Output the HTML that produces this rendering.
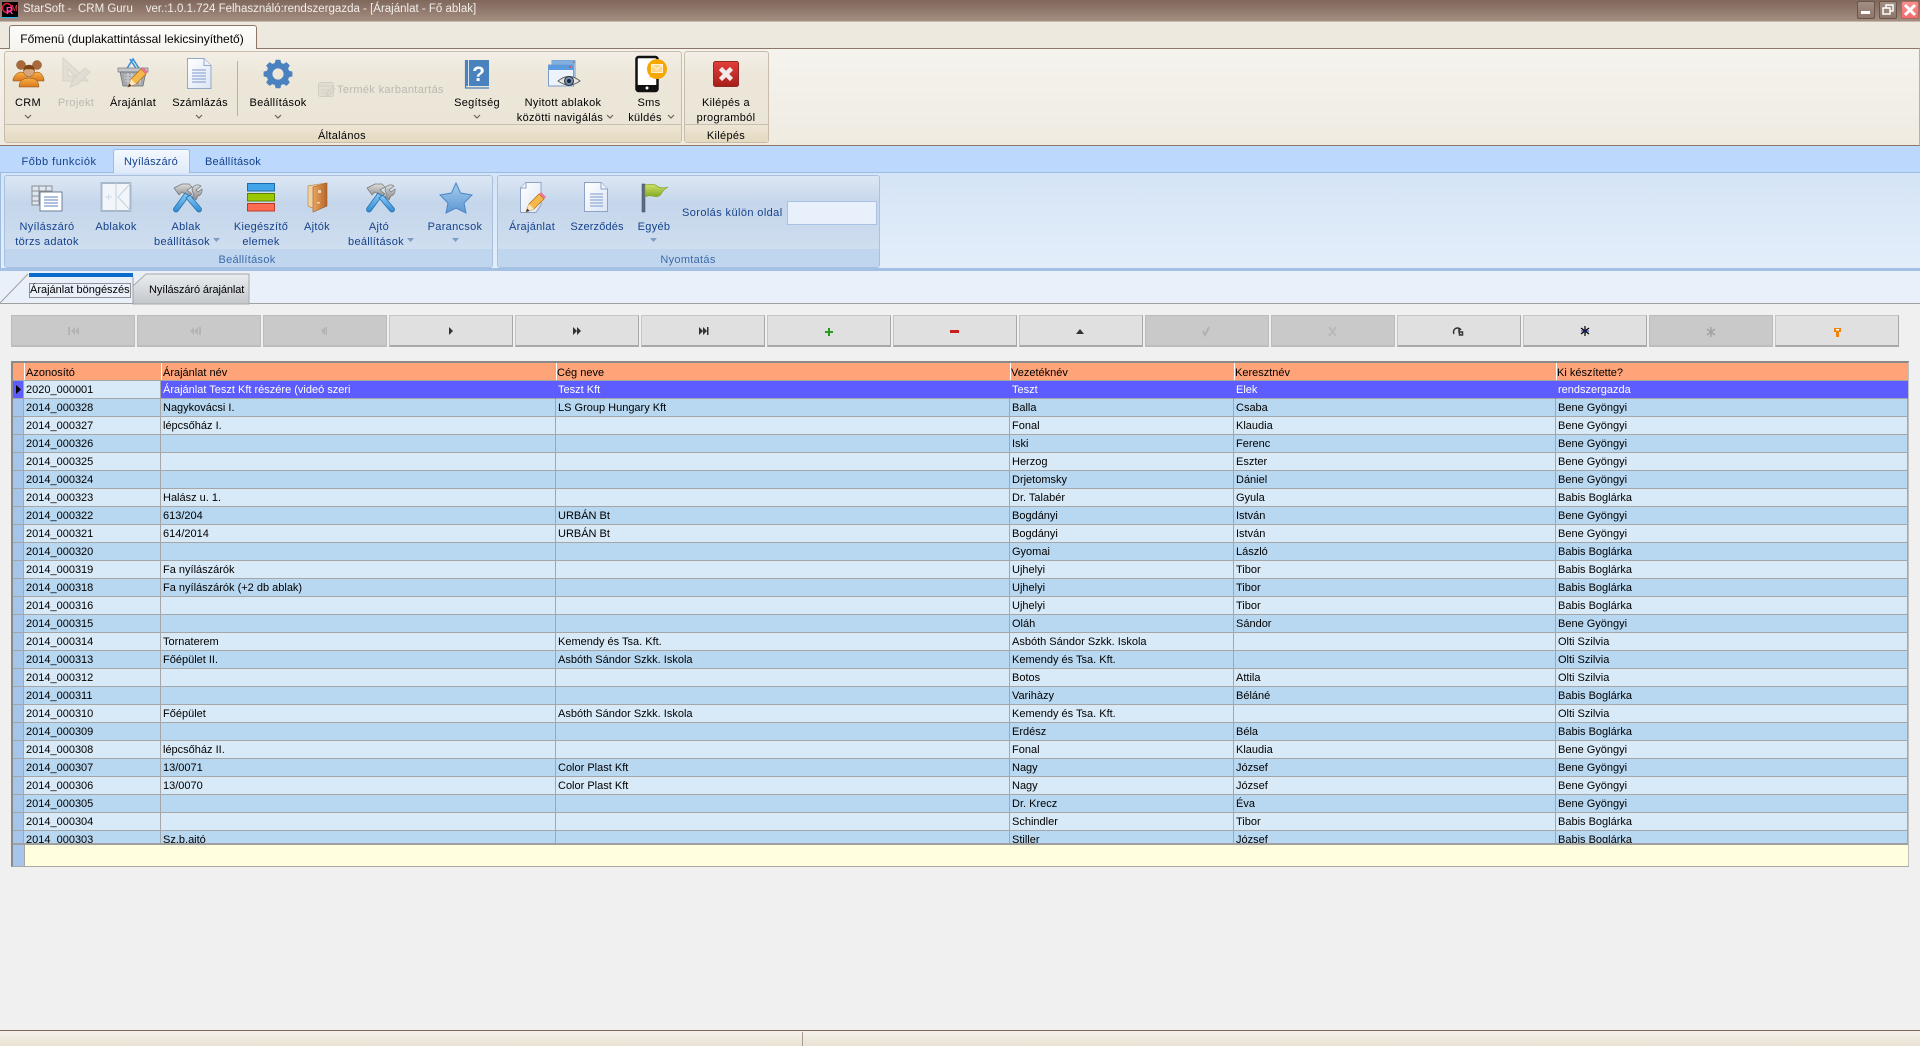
<!DOCTYPE html>
<html lang="hu"><head><meta charset="utf-8"><title>CRM Guru</title>
<style>
html,body{margin:0;padding:0}
body{width:1920px;height:1046px;overflow:hidden;position:relative;background:#f0f0f0;font:11px/14px "Liberation Sans",sans-serif;color:#000}
.a{position:absolute}
.t{position:absolute;transform:translate(-50%,-50%);white-space:pre;line-height:14px;margin-top:1px;letter-spacing:.3px}
.l{position:absolute;transform:translateY(-50%);white-space:pre;line-height:14px;margin-top:1px}
.b{color:#15428b}
.d{color:#bcb8b0}
.grp{position:absolute;box-sizing:border-box;border:1px solid #c9bdaa;border-radius:3px;background:linear-gradient(#f3efe7,#ede7da 25%,#eae4d6)}
.grp i{position:absolute;left:0;right:0;bottom:0;height:17px;border-top:1px solid #c8bfae;background:linear-gradient(#eee6d6,#e4d9c0)}
.grp2{position:absolute;box-sizing:border-box;border:1px solid #a9c1de;border-radius:3px;background:linear-gradient(#dce7f4,#c5d6eb 30%,#d2e1f1)}
.grp2 i{position:absolute;left:0;right:0;bottom:0;height:18px;background:#c0d6ee}
.nb{position:absolute;top:315px;width:124px;height:32px;box-sizing:border-box;background:#e0e0e0;border:1px solid #c6c6c6;border-right-color:#a8a8a8;border-bottom:2px solid #a8a8a8}
.nb.x{background:#c9c9c9;border-color:#bcbcbc}
.win{position:absolute;top:1px;width:18px;height:18px;box-sizing:border-box;border:1px solid #6b5449;border-radius:2px;background:linear-gradient(#a28e83,#8e766a)}
#g{position:absolute;left:13px;top:381px;width:1895px;height:462px;overflow:hidden}
table{border-collapse:separate;border-spacing:0;table-layout:fixed;width:1895px}
td{height:15px;padding:2px 0 0 2px;box-sizing:content-box;border-right:1px solid #a6a6a6;border-bottom:1px solid #a6a6a6;white-space:nowrap;overflow:hidden;line-height:15px;font-size:11px;vertical-align:top}
td:first-child{background:#a5c5ea;padding:0;border-right:1px solid #a6a6a6}
tr:nth-child(odd) td{background:#d8e9f7}
tr:nth-child(even) td{background:#b8d7f0}
tr td:first-child{background:#a5c5ea!important}
tr.s td{background:#5c5cff!important;color:#fff;border-right-color:#5c5cff}
tr.s td:nth-child(2){background:#d8e9f7!important;color:#000;border-right-color:#a6a6a6}
tr.s td:first-child{border-right-color:#a6a6a6}
</style></head><body>

<!-- title bar -->
<div class="a" style="left:0;top:0;width:1920px;height:22px;background:linear-gradient(#7f675b,#a48e80);border-bottom:1px solid #c5b8aa;box-sizing:border-box"></div>
<div class="a" style="left:0;top:22px;width:1920px;height:26px;background:#eee9de"></div>
<div class="l" style="left:23px;top:8px;color:#f2eee9;font-size:11.5px;letter-spacing:0">StarSoft -  CRM Guru    ver.:1.0.1.724 Felhasználó:rendszergazda - [Árajánlat - Fő ablak]</div>
<div class="win" style="left:1857px"></div><div class="win" style="left:1879px"></div>
<div class="win" style="left:1901px;background:linear-gradient(#f98d8d,#f36c6c);border-color:#a86a5f"></div>

<!-- ribbon 1 -->
<div class="a" style="left:0;top:48px;width:1920px;height:98px;box-sizing:border-box;background:linear-gradient(#f5f3ee,#efebe1);border-top:1px solid #8e7668;border-bottom:1px solid #8e7668;border-right:1px solid #bcb0a2"></div>
<div class="a" style="left:9px;top:25px;width:248px;height:24px;box-sizing:border-box;background:linear-gradient(#fdfdfb,#f6f4ef);border:1px solid #8e7668;border-bottom:0;border-radius:3px 3px 0 0"></div>
<div class="t" style="left:132px;top:38px;font-size:12px;letter-spacing:0">Főmenü (duplakattintással lekicsinyíthető)</div>
<div class="grp" style="left:4px;top:51px;width:678px;height:92px"><i></i></div>
<div class="grp" style="left:684px;top:51px;width:85px;height:92px"><i></i></div>
<div class="a" style="left:237px;top:61px;width:1px;height:55px;background:#b9b0a2"></div>

<div class="t" style="left:28px;top:102px">CRM</div>
<div class="t d" style="left:76px;top:102px">Projekt</div>
<div class="t" style="left:133px;top:102px">Árajánlat</div>
<div class="t" style="left:200px;top:102px;letter-spacing:.2px">Számlázás</div>
<div class="t" style="left:278px;top:102px">Beállítások</div>
<div class="l d" style="left:337px;top:89px;letter-spacing:.35px">Termék karbantartás</div>
<div class="t" style="left:477px;top:102px">Segítség</div>
<div class="t" style="left:563px;top:102px">Nyitott ablakok</div>
<div class="t" style="left:560px;top:117px">közötti navigálás</div>
<div class="t" style="left:649px;top:102px">Sms</div>
<div class="t" style="left:645px;top:117px">küldés</div>
<div class="t" style="left:726px;top:102px">Kilépés a</div>
<div class="t" style="left:726px;top:117px">programból</div>
<div class="t" style="left:342px;top:135px">Általános</div>
<div class="t" style="left:726px;top:135px">Kilépés</div>

<!-- ribbon 2 -->
<div class="a" style="left:0;top:146px;width:1920px;height:27px;background:#bcd8fc"></div>
<div class="a" style="left:0;top:172px;width:1920px;height:99px;box-sizing:border-box;background:linear-gradient(#d5e4f6,#e3eefa);border-top:1px solid #9bbbe0;border-bottom:3px solid #a3c1e4;border-left:1px solid #9bbbe0"></div>
<div class="a" style="left:113px;top:149px;width:77px;height:24px;box-sizing:border-box;background:linear-gradient(#f3f8fe,#dfeafa);border:1px solid #9bbbe0;border-bottom:0;border-radius:3px 3px 0 0"></div>
<div class="t b" style="left:59px;top:161px;letter-spacing:.5px">Főbb funkciók</div>
<div class="t b" style="left:151px;top:161px;letter-spacing:.2px">Nyílászáró</div>
<div class="t b" style="left:233px;top:161px;letter-spacing:.2px">Beállítások</div>
<div class="grp2" style="left:4px;top:175px;width:489px;height:93px"><i></i></div>
<div class="grp2" style="left:497px;top:175px;width:383px;height:93px"><i></i></div>

<div class="t b" style="left:47px;top:226px">Nyílászáró</div><div class="t b" style="left:47px;top:241px">törzs adatok</div>
<div class="t b" style="left:116px;top:226px">Ablakok</div>
<div class="t b" style="left:186px;top:226px">Ablak</div><div class="t b" style="left:182px;top:241px">beállítások</div>
<div class="t b" style="left:261px;top:226px">Kiegészítő</div><div class="t b" style="left:261px;top:241px">elemek</div>
<div class="t b" style="left:317px;top:226px">Ajtók</div>
<div class="t b" style="left:379px;top:226px">Ajtó</div><div class="t b" style="left:376px;top:241px">beállítások</div>
<div class="t b" style="left:455px;top:226px">Parancsok</div>
<div class="t" style="left:247px;top:259px;color:#3e6aaa">Beállítások</div>
<div class="t b" style="left:532px;top:226px">Árajánlat</div>
<div class="t b" style="left:597px;top:226px;letter-spacing:.15px">Szerződés</div>
<div class="t b" style="left:654px;top:226px">Egyéb</div>
<div class="l b" style="left:682px;top:212px;letter-spacing:.4px">Sorolás külön oldal</div>
<div class="a" style="left:787px;top:201px;width:90px;height:24px;box-sizing:border-box;background:#e8f0fb;border:1px solid #a9c1e3"></div>
<div class="t" style="left:688px;top:259px;color:#3e6aaa">Nyomtatás</div>

<!-- document tabs -->
<div class="a" style="left:0;top:271px;width:1920px;height:33px;background:#e9f0f9;border-bottom:1px solid #a0a0a0;box-sizing:border-box"></div>
<svg class="a" style="left:0;top:271px" width="260" height="34">
<path d="M133 33V15L146 3H249V33Z" fill="url(#tg)" stroke="#a8a8a8"/>
<path d="M0 32L28 3H133V32Z" fill="#e9f0f9"/><path d="M0 32L28 3" stroke="#a0a0a0" fill="none"/>
<rect x="29" y="2" width="104" height="4" fill="#0a6bcb"/>
<path d="M133 6V33" stroke="#a0a0a0"/>
<rect x="29.5" y="12.5" width="101" height="14" fill="none" stroke="#333" stroke-dasharray="1 1"/>
<defs><linearGradient id="tg" x1="0" y1="0" x2="0" y2="1"><stop offset="0" stop-color="#eaedf0"/><stop offset="1" stop-color="#c3c7cb"/></linearGradient></defs>
</svg>
<div class="l" style="left:30px;top:289px">Árajánlat böngészés</div>
<div class="l" style="left:149px;top:289px;letter-spacing:-.1px">Nyílászáró árajánlat</div>

<!-- nav buttons -->
<div class="nb x" style="left:11px"></div><div class="nb x" style="left:137px"></div><div class="nb x" style="left:263px"></div>
<div class="nb" style="left:389px"></div><div class="nb" style="left:515px"></div><div class="nb" style="left:641px"></div>
<div class="nb" style="left:767px"></div><div class="nb" style="left:893px"></div><div class="nb" style="left:1019px"></div>
<div class="nb x" style="left:1145px"></div><div class="nb x" style="left:1271px"></div>
<div class="nb" style="left:1397px"></div><div class="nb" style="left:1523px"></div>
<div class="nb x" style="left:1649px"></div><div class="nb" style="left:1775px"></div>

<!-- grid -->
<div class="a" style="left:11px;top:361px;width:1898px;height:506px;box-sizing:border-box;border:2px solid #a0a0a0;border-top-color:#8a8a8a;border-left-color:#8a8a8a;border-right:1px solid #c0c0c0;border-bottom:1px solid #a8a8a8;background:#ffffe0"></div>
<div class="a" style="left:13px;top:363px;width:1895px;height:17px;background:#ffa379"></div>
<div class="a" style="left:13px;top:380px;width:1895px;height:1px;background:#a6a6a6"></div>
<div class="a" style="left:24px;top:363px;width:1px;height:17px;background:#fff"></div>
<div class="a" style="left:161px;top:363px;width:1px;height:17px;background:#fff"></div>
<div class="a" style="left:556px;top:363px;width:1px;height:17px;background:#fff"></div>
<div class="a" style="left:1010px;top:363px;width:1px;height:17px;background:#fff"></div>
<div class="a" style="left:1234px;top:363px;width:1px;height:17px;background:#fff"></div>
<div class="a" style="left:1556px;top:363px;width:1px;height:17px;background:#fff"></div>
<div class="l" style="left:26px;top:372px">Azonosító</div>
<div class="l" style="left:163px;top:372px">Árajánlat név</div>
<div class="l" style="left:557px;top:372px">Cég neve</div>
<div class="l" style="left:1011px;top:372px">Vezetéknév</div>
<div class="l" style="left:1235px;top:372px">Keresztnév</div>
<div class="l" style="left:1557px;top:372px">Ki készítette?</div>

<div id="g"><table><colgroup><col style="width:11px"><col style="width:137px"><col style="width:395px"><col style="width:454px"><col style="width:224px"><col style="width:322px"><col style="width:352px"></colgroup>
<tr class="s"><td></td><td>2020_000001</td><td>Árajánlat Teszt Kft részére (videó szeri</td><td>Teszt Kft</td><td>Teszt</td><td>Elek</td><td>rendszergazda</td></tr>
<tr><td></td><td>2014_000328</td><td>Nagykovácsi I.</td><td>LS Group Hungary Kft</td><td>Balla</td><td>Csaba</td><td>Bene Gyöngyi</td></tr>
<tr><td></td><td>2014_000327</td><td>lépcsőház I.</td><td></td><td>Fonal</td><td>Klaudia</td><td>Bene Gyöngyi</td></tr>
<tr><td></td><td>2014_000326</td><td></td><td></td><td>Iski</td><td>Ferenc</td><td>Bene Gyöngyi</td></tr>
<tr><td></td><td>2014_000325</td><td></td><td></td><td>Herzog</td><td>Eszter</td><td>Bene Gyöngyi</td></tr>
<tr><td></td><td>2014_000324</td><td></td><td></td><td>Drjetomsky</td><td>Dániel</td><td>Bene Gyöngyi</td></tr>
<tr><td></td><td>2014_000323</td><td>Halász u. 1.</td><td></td><td>Dr. Talabér</td><td>Gyula</td><td>Babis Boglárka</td></tr>
<tr><td></td><td>2014_000322</td><td>613/204</td><td>URBÁN Bt</td><td>Bogdányi</td><td>István</td><td>Bene Gyöngyi</td></tr>
<tr><td></td><td>2014_000321</td><td>614/2014</td><td>URBÁN Bt</td><td>Bogdányi</td><td>István</td><td>Bene Gyöngyi</td></tr>
<tr><td></td><td>2014_000320</td><td></td><td></td><td>Gyomai</td><td>László</td><td>Babis Boglárka</td></tr>
<tr><td></td><td>2014_000319</td><td>Fa nyílászárók</td><td></td><td>Ujhelyi</td><td>Tibor</td><td>Babis Boglárka</td></tr>
<tr><td></td><td>2014_000318</td><td>Fa nyílászárók (+2 db ablak)</td><td></td><td>Ujhelyi</td><td>Tibor</td><td>Babis Boglárka</td></tr>
<tr><td></td><td>2014_000316</td><td></td><td></td><td>Ujhelyi</td><td>Tibor</td><td>Babis Boglárka</td></tr>
<tr><td></td><td>2014_000315</td><td></td><td></td><td>Oláh</td><td>Sándor</td><td>Bene Gyöngyi</td></tr>
<tr><td></td><td>2014_000314</td><td>Tornaterem</td><td>Kemendy és Tsa. Kft.</td><td>Asbóth Sándor Szkk. Iskola</td><td></td><td>Olti Szilvia</td></tr>
<tr><td></td><td>2014_000313</td><td>Főépület II.</td><td>Asbóth Sándor Szkk. Iskola</td><td>Kemendy és Tsa. Kft.</td><td></td><td>Olti Szilvia</td></tr>
<tr><td></td><td>2014_000312</td><td></td><td></td><td>Botos</td><td>Attila</td><td>Olti Szilvia</td></tr>
<tr><td></td><td>2014_000311</td><td></td><td></td><td>Varihàzy</td><td>Béláné</td><td>Babis Boglárka</td></tr>
<tr><td></td><td>2014_000310</td><td>Főépület</td><td>Asbóth Sándor Szkk. Iskola</td><td>Kemendy és Tsa. Kft.</td><td></td><td>Olti Szilvia</td></tr>
<tr><td></td><td>2014_000309</td><td></td><td></td><td>Erdész</td><td>Béla</td><td>Babis Boglárka</td></tr>
<tr><td></td><td>2014_000308</td><td>lépcsőház II.</td><td></td><td>Fonal</td><td>Klaudia</td><td>Bene Gyöngyi</td></tr>
<tr><td></td><td>2014_000307</td><td>13/0071</td><td>Color Plast Kft</td><td>Nagy</td><td>József</td><td>Bene Gyöngyi</td></tr>
<tr><td></td><td>2014_000306</td><td>13/0070</td><td>Color Plast Kft</td><td>Nagy</td><td>József</td><td>Bene Gyöngyi</td></tr>
<tr><td></td><td>2014_000305</td><td></td><td></td><td>Dr. Krecz</td><td>Éva</td><td>Bene Gyöngyi</td></tr>
<tr><td></td><td>2014_000304</td><td></td><td></td><td>Schindler</td><td>Tibor</td><td>Babis Boglárka</td></tr>
<tr><td></td><td>2014_000303</td><td>Sz.b.ajtó</td><td></td><td>Stiller</td><td>József</td><td>Babis Boglárka</td></tr>
</table></div>
<div class="a" style="left:13px;top:843px;width:1895px;height:2px;background:#a0a0a0"></div>
<div class="a" style="left:13px;top:845px;width:11px;height:21px;background:#a5c5ea;border-right:1px solid #a6a6a6"></div>

<!-- status bar -->
<div class="a" style="left:0;top:1030px;width:1920px;height:16px;box-sizing:border-box;border-top:1px solid #7d6558;background:linear-gradient(#f6f1ea,#e8e3d2)"></div>
<div class="a" style="left:802px;top:1032px;width:1px;height:14px;background:#a89a8e"></div>

<!-- icons overlay -->
<svg class="a" style="left:0;top:0;pointer-events:none" width="1920" height="1046" viewBox="0 0 1920 1046">
<defs>
<linearGradient id="or" x1="0" y1="0" x2="0" y2="1"><stop offset="0" stop-color="#f7b04a"/><stop offset="1" stop-color="#d9791a"/></linearGradient>
<linearGradient id="doc" x1="0" y1="0" x2="1" y2="1"><stop offset="0" stop-color="#fff"/><stop offset="1" stop-color="#dbe5f5"/></linearGradient>
<linearGradient id="blu" x1="0" y1="0" x2="0" y2="1"><stop offset="0" stop-color="#8ecaf5"/><stop offset="1" stop-color="#2f8ad0"/></linearGradient>
<linearGradient id="star" x1="0" y1="0" x2="0" y2="1"><stop offset="0" stop-color="#a5cdf0"/><stop offset="1" stop-color="#5e97d2"/></linearGradient>
<linearGradient id="rd" x1="0" y1="0" x2="0" y2="1"><stop offset="0" stop-color="#e2403a"/><stop offset="1" stop-color="#a81e1a"/></linearGradient>
<linearGradient id="gry" x1="0" y1="0" x2="0" y2="1"><stop offset="0" stop-color="#ddd"/><stop offset="1" stop-color="#8a8a8a"/></linearGradient>
<linearGradient id="grn" x1="0" y1="0" x2="0" y2="1"><stop offset="0" stop-color="#cde26a"/><stop offset="1" stop-color="#84a824"/></linearGradient>
<linearGradient id="dr" x1="0" y1="0" x2="1" y2="0"><stop offset="0" stop-color="#e9a45c"/><stop offset="1" stop-color="#b5662a"/></linearGradient>
<g id="tools">
<path d="M3 4L11 0H18L21 3L16 6L21 10L18 13L11 8L8 11Z" fill="url(#gry)" stroke="#777" stroke-width=".7"/>
<path d="M14 9L3 24a2.5 2.5 0 0 0 4 3L18 12Z" fill="url(#blu)" stroke="#2373b5" stroke-width=".8"/>
<path d="M30 2a6 6 0 0 0-8 1a6 6 0 0 0 0 6l1 1L21 13L25 16L27 12a6 6 0 0 0 4-7L27 8L25 6Z" fill="url(#gry)" stroke="#777" stroke-width=".7"/>
<path d="M15 14L26 27a2.5 2.5 0 0 0 4-3L19 11Z" fill="url(#blu)" stroke="#2373b5" stroke-width=".8"/>
</g>
<g id="pencil"><path d="M0 15L3 7L13 -3L18 2L8 12Z" fill="#f5b84a" stroke="#b26a14" stroke-width=".7"/><path d="M13 -3L15 -5L20 0L18 2Z" fill="#e7788f"/><path d="M0 15L3 7L8 12Z" fill="#fbe6c0"/><path d="M0 15L1.3 11.5L3.5 13.7Z" fill="#333"/></g>
<path id="chev" d="M0 0L3 3L6 0" fill="none" stroke="#6b6357" stroke-width="1.2"/>
<path id="tri" d="M0 0H7L3.5 4Z" fill="#7e9bc4"/>
</defs>

<!-- logo -->
<rect x="2" y="2" width="16" height="16" fill="#000"/>
<circle cx="7" cy="8" r="4.5" fill="none" stroke="#f02030" stroke-width="1.4"/>
<text x="6" y="14" font-family="Liberation Sans" font-size="10" font-weight="bold" fill="#ff40c0">R</text>
<text x="11" y="11" font-family="Liberation Sans" font-size="8" fill="#ff4050">M</text>
<rect x="2" y="17" width="16" height="1" fill="#20c0ff"/>

<!-- window buttons -->
<rect x="1861" y="11" width="9" height="3" fill="#fff"/>
<rect x="1886" y="5" width="7" height="6" fill="none" stroke="#fff" stroke-width="1.5"/><rect x="1883" y="8" width="7" height="6" fill="#9a8478" stroke="#fff" stroke-width="1.5"/>
<path d="M1905 5L1915 15M1915 5L1905 15" stroke="#fff" stroke-width="3"/>

<!-- CRM people -->
<g stroke="#8a4a18" stroke-width=".5">
<circle cx="21" cy="65" r="4.500" fill="#a86a3c"/><circle cx="37" cy="65" r="4.500" fill="#a86a3c"/>
<path d="M13 79q3-7 8-7t8 7v2H13Z" fill="url(#or)"/><path d="M29 79q3-7 8-7t7 7v2H29Z" fill="url(#or)"/>
<circle cx="29" cy="71" r="5.500" fill="#d8a67a"/><path d="M23.500 71q0-6 5.500-6t5.500 6l-2-2h-7Z" fill="#7a4418"/>
<path d="M19 87q0-9 10-9t10 9Z" fill="url(#or)"/>
</g>
<!-- Projekt -->
<g opacity=".75"><path d="M63 58L88 81H63Z M68 69V76H75Z" fill="#e0dcd3" fill-rule="evenodd" stroke="#cfcbc2"/><path d="M70 87L73 79L85 68L90 72L78 84Z" fill="#dedad1" stroke="#cfcbc2"/></g>
<!-- basket -->
<path d="M126 70L133 59L140 70M130 59L137 70" fill="none" stroke="#3d8ed6" stroke-width="1.6"/>
<path d="M118 68H148V72H118Z" fill="#c4c6cb" stroke="#7a7d84" stroke-width=".7"/>
<path d="M120 72H146L143 86H123Z" fill="#a5a7ad" stroke="#6a6d74" stroke-width=".7"/>
<path d="M124 75H142M124 78H142M125 81H141M128 73V85M132 73V85M136 73V85M140 73V85" stroke="#dadbe0" stroke-width=".8"/>
<use href="#pencil" x="128" y="72"/>
<!-- doc -->
<g id="docA"><path d="M187.500 58.500H204L211 65.500V88.500H187.500Z" fill="url(#doc)" stroke="#93a7c9"/><path d="M204 58.500V65.500H211" fill="#eef3fb" stroke="#93a7c9"/><path d="M192 70H206M192 73H206M192 76H206M192 79H206M192 82H206" stroke="#7d99c9"/></g>
<!-- gear -->
<g fill="#4a82c0" transform="translate(278 74) scale(.8) translate(-278 -76.800)"><path fill-rule="evenodd" d="M275 59h6l1 4 3 1.200 3.600-2.200 4.200 4.200-2.200 3.600 1.200 3 4.200 1v6l-4.200 1-1.200 3 2.200 3.600-4.200 4.200-3.600-2.200-3 1.200-1 4h-6l-1-4-3-1.200-3.600 2.200-4.200-4.200 2.200-3.600-1.200-3-4.200-1v-6l4.200-1 1.200-3-2.200-3.600 4.200-4.200 3.600 2.200 3-1.200Zm3 10.800a7 7 0 1 0 .01 0Z"/></g>
<!-- termek -->
<g opacity=".7"><rect x="318.500" y="82.500" width="15" height="14" rx="2" fill="#dfdbd2" stroke="#c9c5bb"/><path d="M319 86H333M321 90H329M321 93H327" stroke="#c9c5bb"/><path d="M326 96L328 91L333 87L335 89L330 95Z" fill="#d6d2c8" stroke="#c2bdb3" stroke-width=".6"/></g>
<!-- help -->
<rect x="466" y="60" width="23" height="26" fill="#4a82bd"/><path d="M465.500 60V88H489" fill="none" stroke="#4a82bd" stroke-width="1.2"/><rect x="468" y="60" width="1" height="26" fill="#d6e4f2"/>
<text x="478.500" y="81" font-family="Liberation Sans" font-size="21" font-weight="bold" fill="#fff" text-anchor="middle">?</text>
<!-- windows eye -->
<rect x="552" y="60.500" width="23" height="19" fill="#cfe0f3" stroke="#7c9cc7"/><rect x="552" y="60.500" width="23" height="4" fill="#7fb0e0"/>
<rect x="548.500" y="65" width="25" height="21" fill="#edf3fb" stroke="#7c9cc7"/><rect x="548.500" y="65" width="25" height="5" fill="#5a9be0"/><rect x="569" y="66" width="2" height="2" fill="#e25050"/><rect x="573" y="61.500" width="1.500" height="1.500" fill="#e25050"/>
<path d="M558 81q11-9 22 0q-11 8-22 0Z" fill="#e8e6e0" stroke="#5b5f66"/><circle cx="569" cy="81" r="4.500" fill="#6e8eb8" stroke="#333"/><circle cx="569" cy="81" r="2" fill="#1c2430"/>
<!-- phone -->
<rect x="636.500" y="57" width="21" height="34" rx="2" fill="#fff" stroke="#111" stroke-width="2.500"/><rect x="636" y="85" width="22" height="6" fill="#111"/><circle cx="647" cy="88" r="1.500" fill="#fff"/>
<path d="M649 78l3-4h5z" fill="#f7a800"/><circle cx="657" cy="69" r="10" fill="#f7a800"/><rect x="651.500" y="64.500" width="11" height="8" fill="#fbd58a" stroke="#fff" stroke-width=".8"/><path d="M652 65L657 69.500L662 65" fill="none" stroke="#fff" stroke-width=".8"/>
<!-- exit -->
<rect x="713.500" y="61.500" width="25" height="25" rx="2" fill="url(#rd)" stroke="#8f2a28"/>
<path d="M720.500 68.500L731.500 79.500M731.500 68.500L720.500 79.500" stroke="#f0eaea" stroke-width="4.500"/>

<!-- chevrons ribbon 1 -->
<use href="#chev" x="25" y="115"/><use href="#chev" x="196" y="115"/><use href="#chev" x="275" y="115"/><use href="#chev" x="474" y="115"/><use href="#chev" x="607" y="115"/><use href="#chev" x="668" y="115"/>

<!-- table doc -->
<g stroke="#8d8d8d" fill="#dde6f2"><path d="M32 186H52V205H32Z" /><path d="M32 191H52M32 196H52M32 201H52M39 186V205M46 186V205" fill="none"/></g>
<rect x="40" y="192" width="22" height="19" fill="#fff" stroke="#6d7f98"/><path d="M44 197H58M44 200H58M44 203H58M44 206H58" stroke="#5b80c0"/>
<!-- window -->
<rect x="101.500" y="183" width="29" height="28" fill="#f2f6fb" stroke="#a8b8cc" stroke-width="2"/><path d="M116 183V211M131 183L118 197L131 211" stroke="#c2cfdd" fill="none"/><path d="M105 197H112M108.500 194V200" stroke="#d0dbe8"/>
<!-- tools -->
<use href="#tools" x="171" y="184"/><use href="#tools" x="364" y="184"/>
<!-- stripes -->
<rect x="247.500" y="183.500" width="27" height="7.500" fill="#41a5e8" stroke="#1f6aa8"/><rect x="247.500" y="193.500" width="27" height="7.500" fill="#9bc800" stroke="#5f8200"/><rect x="247.500" y="203.500" width="27" height="7.500" fill="#ff6a50" stroke="#b83c2c"/>
<!-- door -->
<path d="M308 186L326 183V205L312 208L308 206Z" fill="#eed2a6" stroke="#c28a44" stroke-width=".7"/><path d="M313 187L327 183V206L313 212Z" fill="url(#dr)" stroke="#9a5a24" stroke-width=".6"/><rect x="318" y="190" width="3" height="3" fill="#e9d3b0"/><rect x="317" y="202" width="3" height="1.500" fill="#e9d3b0"/>
<!-- star -->
<path d="M456 183L460.500 193L472 195L464 203L466 213L456 208L446 213L448 203L440 195L451.500 193Z" fill="url(#star)" stroke="#4d86c4"/>
<!-- doc pencil -->
<path d="M520.500 188L526 182.500H541V205L536 212.500H520.500Z" fill="url(#doc)" stroke="#8ea3c4"/><path d="M526 182.500V188H520.500" fill="#eef3fb" stroke="#8ea3c4"/>
<use href="#pencil" x="526" y="197"/>
<!-- doc 2 -->
<path d="M584.500 182.500H601L607.500 189V211.500H584.500Z" fill="url(#doc)" stroke="#8ea3c4"/><path d="M601 182.500V189H607.500" fill="#eef3fb" stroke="#8ea3c4"/><path d="M590 194H603M590 197H603M590 200H603M590 203H603M590 206H603" stroke="#7d99c9"/>
<!-- flag -->
<rect x="642" y="184" width="3" height="28" fill="#5e6a80" stroke="#3f4a60" stroke-width=".5"/>
<path d="M645 185q8-2 12 1t11 1q-5 3-7 7t-9 2q-4-1-7 1Z" fill="url(#grn)" stroke="#7f9c22" stroke-width=".6"/>
<!-- ribbon 2 tris -->
<use href="#tri" x="213" y="238"/><use href="#tri" x="407" y="238"/><use href="#tri" x="452" y="238"/><use href="#tri" x="650" y="238"/>

<!-- nav icons -->
<g fill="#b4b4b4"><path d="M68 327h2v8h-2Z M75 327v8l-4-4Z M79 327v8l-4-4Z"/><path d="M194 327v8l-4-4Z M198 327v8l-4-4Z M199 327h2v8h-2Z"/><path d="M325 327v8l-4-4Z"/><rect x="325.500" y="327" width="1.500" height="8"/></g>
<g fill="#333"><path d="M449 327v8l4-4Z"/><path d="M573 327v8l4-4Z M577 327v8l4-4Z"/><path d="M699 327v8l4-4Z M703 327v8l4-4Z"/><rect x="707" y="327" width="1.500" height="8"/></g>
<path d="M825 331h3v-3h2v3h3v2h-3v3h-2v-3h-3Z" fill="#2c9a20"/>
<rect x="950" y="330" width="9" height="3" fill="#c82020"/>
<path d="M1076 334l4-5 4 5Z" fill="#333"/>
<path d="M1203 331l2 4 4-8" fill="none" stroke="#b2b2b2" stroke-width="2"/>
<path d="M1329 327l7 9M1336 327l-7 9" stroke="#b8b8b8" stroke-width="2"/>
<path d="M1454 334a4 4 0 0 1 7-4M1459 328v4h3.500v3h-3z" fill="none" stroke="#333" stroke-width="1.500"/>
<path d="M1585 326v10M1581 328l8 6M1589 328l-8 6" stroke="#000" stroke-width="1.200"/><path d="M1581 331h8" stroke="#2030c0"/>
<path d="M1711 327v10M1707 329l8 6M1715 329l-8 6" stroke="#a2a2a2" stroke-width="1.500"/>
<path d="M1834 328h7v4h-2v5h-3v-5h-2Z" fill="#ef8410"/><rect x="1836" y="329" width="3" height="1.500" fill="#fff"/>
<!-- grid marker -->
<path d="M16 385v9l5-4.500Z" fill="#000"/>
</svg>
</body></html>
